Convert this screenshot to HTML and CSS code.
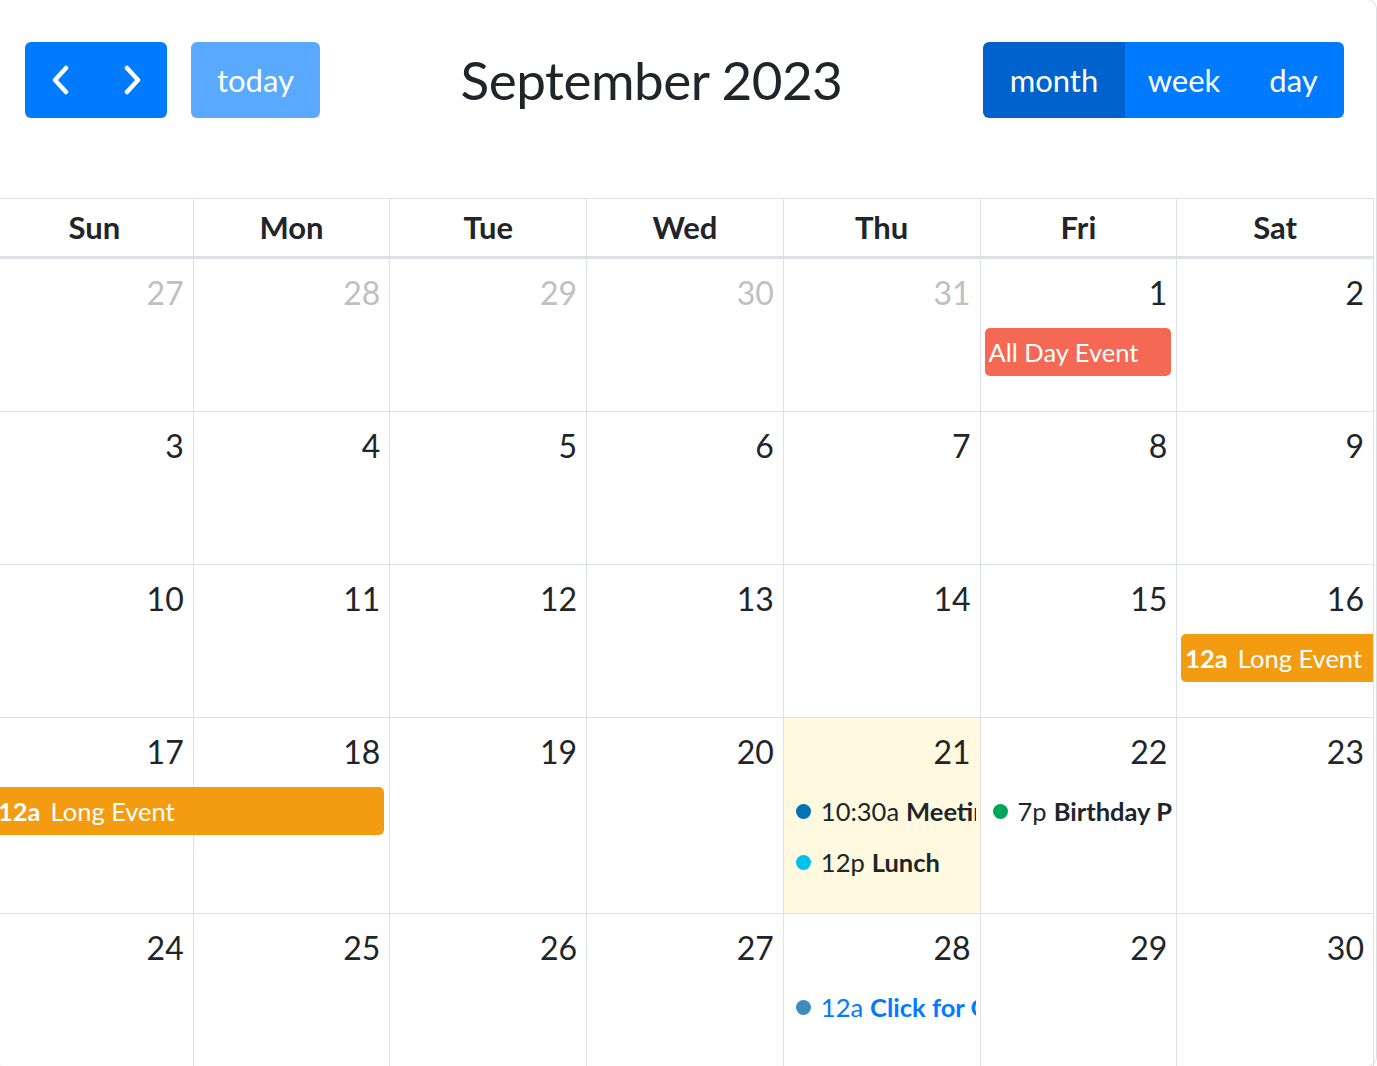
FILE: index.html
```html
<!DOCTYPE html>
<html lang="en">
<head>
<meta charset="utf-8">
<title>Calendar</title>
<link rel="stylesheet" href="styles.css">
</head>
<body>
<div class="card">
  <div class="toolbar">
    <div class="tb-left">
      <div class="btn-group">
        <button class="btn btn-icon" aria-label="prev">
          <svg width="20" height="30" viewBox="0 0 20 30"><polyline points="15,3 4,15 15,27" fill="none" stroke="#fff" stroke-width="4.5" stroke-linecap="round" stroke-linejoin="round"/></svg>
        </button>
        <button class="btn btn-icon" aria-label="next">
          <svg width="20" height="30" viewBox="0 0 20 30"><polyline points="5,3 16,15 5,27" fill="none" stroke="#fff" stroke-width="4.5" stroke-linecap="round" stroke-linejoin="round"/></svg>
        </button>
      </div>
      <button class="btn btn-today">today</button>
    </div>
    <h2 class="title">September 2023</h2>
    <div class="btn-group">
      <button class="btn btn-view btn-month active">month</button>
      <button class="btn btn-view btn-week">week</button>
      <button class="btn btn-view btn-day">day</button>
    </div>
  </div>

  <div class="cal">
    <div class="dow-row">
      <div class="dow">Sun</div><div class="dow">Mon</div><div class="dow">Tue</div><div class="dow">Wed</div><div class="dow">Thu</div><div class="dow">Fri</div><div class="dow">Sat</div>
    </div>

    <div class="week first">
      <div class="day other"><span class="num">27</span></div>
      <div class="day other"><span class="num">28</span></div>
      <div class="day other"><span class="num">29</span></div>
      <div class="day other"><span class="num">30</span></div>
      <div class="day other"><span class="num">31</span></div>
      <div class="day"><span class="num">1</span></div>
      <div class="day"><span class="num">2</span></div>
      <div class="ev-block ev-red col-6">All Day Event</div>
    </div>

    <div class="week">
      <div class="day"><span class="num">3</span></div>
      <div class="day"><span class="num">4</span></div>
      <div class="day"><span class="num">5</span></div>
      <div class="day"><span class="num">6</span></div>
      <div class="day"><span class="num">7</span></div>
      <div class="day"><span class="num">8</span></div>
      <div class="day"><span class="num">9</span></div>
    </div>

    <div class="week">
      <div class="day"><span class="num">10</span></div>
      <div class="day"><span class="num">11</span></div>
      <div class="day"><span class="num">12</span></div>
      <div class="day"><span class="num">13</span></div>
      <div class="day"><span class="num">14</span></div>
      <div class="day"><span class="num">15</span></div>
      <div class="day"><span class="num">16</span></div>
      <div class="ev-block ev-orange col-7 cont-end"><b class="ev-time">12a</b>Long Event</div>
    </div>

    <div class="week tall">
      <div class="day"><span class="num">17</span></div>
      <div class="day"><span class="num">18</span></div>
      <div class="day"><span class="num">19</span></div>
      <div class="day"><span class="num">20</span></div>
      <div class="day today"><span class="num">21</span></div>
      <div class="day"><span class="num">22</span></div>
      <div class="day"><span class="num">23</span></div>
      <div class="ev-block ev-orange col-1-2 cont-start"><b class="ev-time">12a</b>Long Event</div>
      <div class="ev-dot col-5"><span class="dot dot-meeting"></span><span class="t">10:30a</span><b>Meeting</b></div>
      <div class="ev-dot col-5 line-2"><span class="dot dot-lunch"></span><span class="t">12p</span><b>Lunch</b></div>
      <div class="ev-dot col-6"><span class="dot dot-birthday"></span><span class="t">7p</span><b>Birthday Party</b></div>
    </div>

    <div class="week last">
      <div class="day"><span class="num">24</span></div>
      <div class="day"><span class="num">25</span></div>
      <div class="day"><span class="num">26</span></div>
      <div class="day"><span class="num">27</span></div>
      <div class="day"><span class="num">28</span></div>
      <div class="day"><span class="num">29</span></div>
      <div class="day"><span class="num">30</span></div>
      <div class="ev-dot ev-link col-5"><span class="dot dot-google"></span><span class="t">12a</span><b>Click for Google</b></div>
    </div>
  </div>
</div>
</body>
</html>
```

FILE: styles.css
```css
html, body {
  margin: 0;
  padding: 0;
  overflow: hidden;
  background: #fff;
}

body {
  font-family: "Lato", "Liberation Sans", sans-serif;
  color: #212529;
}

.card {
  box-sizing: border-box;
  width: 1385px;
  margin: -1px 0 0 -8px;
  border: 1px solid #dcdfe3;
  border-radius: 10px;
  background: #fff;
}

/* ---------- toolbar ---------- */
.toolbar {
  display: flex;
  align-items: center;
  justify-content: space-between;
  padding: 42px 32px 0 32px;
  margin-bottom: 80px;
}

.tb-left {
  display: flex;
  align-items: center;
  gap: 24px;
}

.btn-group {
  display: flex;
}

.btn {
  box-sizing: border-box;
  height: 76px;
  border: 0;
  margin: 0;
  background: #007bff;
  color: #fff;
  font-family: "Lato", "Liberation Sans", sans-serif;
  font-size: 31px;
  line-height: 76px;
  padding: 0;
  border-radius: 0;
  display: flex;
  align-items: center;
  justify-content: center;
}

.btn-group .btn:first-child {
  border-radius: 6px 0 0 6px;
}

.btn-group .btn:last-child {
  border-radius: 0 6px 6px 0;
}

.btn-icon {
  width: 71px;
}

.btn-today {
  width: 129px;
  border-radius: 6px;
  background: #59aaff;
}

.btn-month {
  width: 142px;
}

.btn-week {
  width: 118px;
}

.btn-day {
  width: 101px;
}

.btn-view.active {
  background: #0062cc;
}

.title {
  margin: 0;
  font-size: 53px;
  font-weight: 400;
  line-height: 76px;
  color: #212529;
  letter-spacing: -0.5px;
}

/* ---------- grid ---------- */
.cal {
  margin: 0 2px 0 2px;
  border-left: 1px solid #dee2e6;
  border-right: 1px solid #dee2e6;
}

.dow-row {
  display: grid;
  grid-template-columns: repeat(7, 1fr);
  border-top: 1px solid #dee2e6;
  border-bottom: 3px solid #dee2e6;
}

.dow {
  height: 57px;
  line-height: 57px;
  text-align: center;
  font-weight: 700;
  font-size: 31px;
  border-left: 1px solid #dee2e6;
}

.dow:first-child,
.day:first-child {
  border-left: 0;
}

.week {
  display: grid;
  grid-template-columns: repeat(7, 1fr);
  grid-template-rows: 69px 51px 1fr;
  height: 153px;
  border-top: 1px solid #dee2e6;
  box-sizing: border-box;
}

.week.first {
  border-top: 0;
  height: 152px;
}

.week.tall {
  grid-template-rows: 69px 51px 51px 1fr;
  height: 196px;
}

.day {
  grid-row: 1 / -1;
  border-left: 1px solid #dee2e6;
  text-align: right;
  padding: 10px 9px 0 0;
  min-width: 0;
}

.day:nth-child(1) { grid-column: 1; }
.day:nth-child(2) { grid-column: 2; }
.day:nth-child(3) { grid-column: 3; }
.day:nth-child(4) { grid-column: 4; }
.day:nth-child(5) { grid-column: 5; }
.day:nth-child(6) { grid-column: 6; }
.day:nth-child(7) { grid-column: 7; }

.day.today {
  background: #fffadf;
}

.num {
  display: inline-block;
  font-size: 32px;
  line-height: 48px;
  color: #212529;
}

.day.other .num {
  color: #bfc0c1;
}

/* ---------- events ---------- */
.ev-block {
  grid-row: 2;
  height: 48px;
  line-height: 48px;
  margin: 0 5px 0 5px;
  padding: 0 4px;
  border-radius: 5px;
  color: #fff;
  font-size: 25.5px;
  white-space: nowrap;
  overflow: hidden;
  min-width: 0;
}

.ev-time {
  font-weight: 700;
  margin-right: 10px;
}

.ev-red { background: #f56954; }
.ev-orange { background: #f39c12; }

.col-1-2 { grid-column: 1 / 3; }
.col-5 { grid-column: 5; }
.col-6 { grid-column: 6; }
.col-7 { grid-column: 7; }

.cont-end {
  margin-right: 0;
  border-radius: 5px 0 0 5px;
}

.cont-start {
  margin-left: 0;
  border-radius: 0 5px 5px 0;
  padding-left: 2px;
}

.ev-dot {
  grid-row: 2;
  height: 48px;
  margin: 0 4px 0 5px;
  padding-left: 8px;
  display: flex;
  align-items: center;
  white-space: nowrap;
  overflow: hidden;
  font-size: 25.5px;
  color: #212529;
  min-width: 0;
}

.ev-dot.line-2 {
  grid-row: 3;
}

.ev-dot .t {
  margin-right: 7px;
}

.ev-dot b {
  font-weight: 700;
}

.dot {
  flex: none;
  width: 15px;
  height: 15px;
  border-radius: 50%;
  margin-right: 10px;
}

.dot-meeting { background: #0073b7; }
.dot-lunch { background: #00c0ef; }
.dot-birthday { background: #00a65a; }
.dot-google { background: #3c8dbc; }

.ev-link {
  color: #007bff;
}
```
